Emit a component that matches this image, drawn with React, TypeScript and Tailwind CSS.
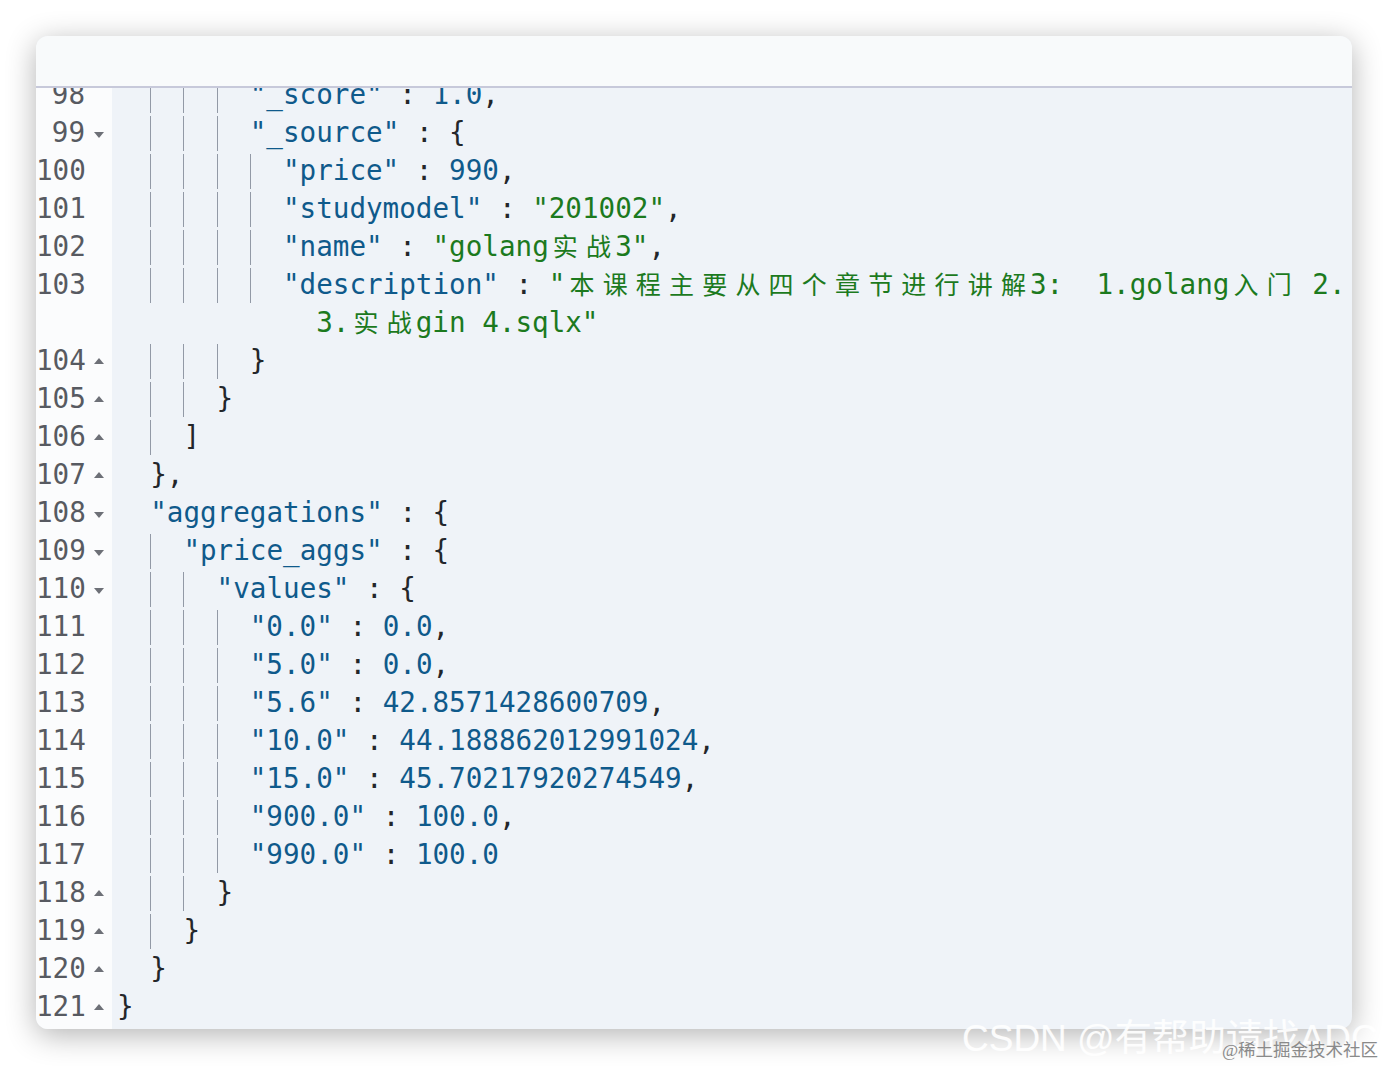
import React from 'react';

type Tok = { t: 'k' | 's' | 'n' | 'p'; v: string };
type Line = { n?: number; d: number; fold?: 'down' | 'up'; toks: Tok[]; wrap?: boolean };

const color: Record<Tok['t'], string> = {
  k: 'text-[#0f5a8b]',
  s: 'text-[#1c7a1e]',
  n: 'text-[#0f5a8b]',
  p: 'text-[#23262a]',
};

const k = (v: string): Tok => ({ t: 'k', v });
const s = (v: string): Tok => ({ t: 's', v });
const n = (v: string): Tok => ({ t: 'n', v });
const p = (v: string): Tok => ({ t: 'p', v });

const pair = (key: string, val: string, last = false): Tok[] =>
  last ? [k(key), p(' : '), n(val)] : [k(key), p(' : '), n(val), p(',')];

const lines: Line[] = [
  { n: 98, d: 4, toks: pair('"_score"', '1.0') },
  { n: 99, d: 4, fold: 'down', toks: [k('"_source"'), p(' : {')] },
  { n: 100, d: 5, toks: pair('"price"', '990') },
  { n: 101, d: 5, toks: [k('"studymodel"'), p(' : '), s('"201002"'), p(',')] },
  { n: 102, d: 5, toks: [k('"name"'), p(' : '), s('"golang实战3"'), p(',')] },
  { n: 103, d: 5, toks: [k('"description"'), p(' : '), s('"本课程主要从四个章节进行讲解3:  1.golang入门 2.')] },
  { d: 6, wrap: true, toks: [s('3.实战gin 4.sqlx"')] },
  { n: 104, d: 4, fold: 'up', toks: [p('}')] },
  { n: 105, d: 3, fold: 'up', toks: [p('}')] },
  { n: 106, d: 2, fold: 'up', toks: [p(']')] },
  { n: 107, d: 1, fold: 'up', toks: [p('},')] },
  { n: 108, d: 1, fold: 'down', toks: [k('"aggregations"'), p(' : {')] },
  { n: 109, d: 2, fold: 'down', toks: [k('"price_aggs"'), p(' : {')] },
  { n: 110, d: 3, fold: 'down', toks: [k('"values"'), p(' : {')] },
  { n: 111, d: 4, toks: pair('"0.0"', '0.0') },
  { n: 112, d: 4, toks: pair('"5.0"', '0.0') },
  { n: 113, d: 4, toks: pair('"5.6"', '42.8571428600709') },
  { n: 114, d: 4, toks: pair('"10.0"', '44.188862012991024') },
  { n: 115, d: 4, toks: pair('"15.0"', '45.70217920274549') },
  { n: 116, d: 4, toks: pair('"900.0"', '100.0') },
  { n: 117, d: 4, toks: pair('"990.0"', '100.0', true) },
  { n: 118, d: 3, fold: 'up', toks: [p('}')] },
  { n: 119, d: 2, fold: 'up', toks: [p('}')] },
  { n: 120, d: 1, fold: 'up', toks: [p('}')] },
  { n: 121, d: 0, fold: 'up', toks: [p('}')] },
];

// wide (CJK) characters take two cells, like the editor does
const renderText = (v: string) => {
  const out: React.ReactNode[] = [];
  let buf = '';
  let i = 0;
  for (const ch of v) {
    if (ch.charCodeAt(0) >= 0x2e80) {
      if (buf) out.push(buf);
      buf = '';
      out.push(
        <span key={i} className="inline-block w-[33.2px] text-center text-[25px]">
          {ch}
        </span>
      );
    } else {
      buf += ch;
    }
    i++;
  }
  if (buf) out.push(buf);
  return out;
};

const FoldArrow = ({ dir }: { dir: 'down' | 'up' }) => (
  <svg width="10" height="6" viewBox="0 0 10 6" className={dir === 'down' ? 'mt-[4px]' : 'mt-[-1px]'}>
    <polygon points={dir === 'down' ? '0,0 10,0 5,6' : '0,6 10,6 5,0'} fill="#6d7077" />
  </svg>
);

export default function App() {
  return (
    <div className="w-[1388px] h-[1066px] bg-white relative overflow-hidden pt-[36px] pl-[36px]">
      {/* Editor window */}
      <div className="w-[1316px] h-[993px] rounded-[12px] overflow-hidden flex flex-col bg-[#eff3f8] shadow-[0_6px_30px_rgba(0,0,0,0.3)]">
        <div className="h-[52px] flex-none bg-[#f8fafb] border-b-2 border-[#c7c9da]" />
        <div className="flex-1 flex overflow-hidden font-['DejaVu_Sans_Mono','Noto_Sans_CJK_SC',monospace] text-[27.6px]">
          {/* Gutter */}
          <div className="w-[76px] flex-none bg-[#fbfcfd] flex flex-col -mt-[12px]">
            {lines.map((l, i) => (
              <div key={i} className="h-[38px] flex-none flex items-center">
                <span className="w-[49px] text-right text-[#575a61] whitespace-pre">{l.n ?? ''}</span>
                <span className="w-[27px] pl-[9px] flex items-center">
                  {l.fold && <FoldArrow dir={l.fold} />}
                </span>
              </div>
            ))}
          </div>

          {/* Code */}
          <div className="flex-1 flex flex-col -mt-[12px] pl-[5px] overflow-hidden">
            {lines.map((l, i) => (
              <div key={i} className="h-[38px] flex-none flex items-center whitespace-pre">
                {Array.from({ length: l.d }).map((_, j) => (
                  <span
                    key={j}
                    className={
                      j >= 1 && !l.wrap
                        ? 'w-[33.2px] h-[35px] flex-none border-l-[1.5px] border-[#9299a6]'
                        : 'w-[33.2px] h-[35px] flex-none'
                    }
                  />
                ))}
                <span className="flex-none">
                  {l.toks.map((t, j) => (
                    <span key={j} className={color[t.t]}>
                      {renderText(t.v)}
                    </span>
                  ))}
                </span>
              </div>
            ))}
          </div>
        </div>
      </div>

      {/* Watermarks */}
      <div className="absolute left-[962px] top-[1017px] text-[37px] leading-[44px] text-white/90 whitespace-nowrap font-['Liberation_Sans','Noto_Sans_CJK_SC',sans-serif]">
        CSDN @有帮助请找ADC
      </div>
      <div className="absolute left-[1222px] top-[1038px] text-[17.5px] leading-[24px] text-[#8a8a8a] whitespace-nowrap font-['Liberation_Serif','Noto_Sans_CJK_SC',serif]">
        @稀土掘金技术社区
      </div>
    </div>
  );
}
